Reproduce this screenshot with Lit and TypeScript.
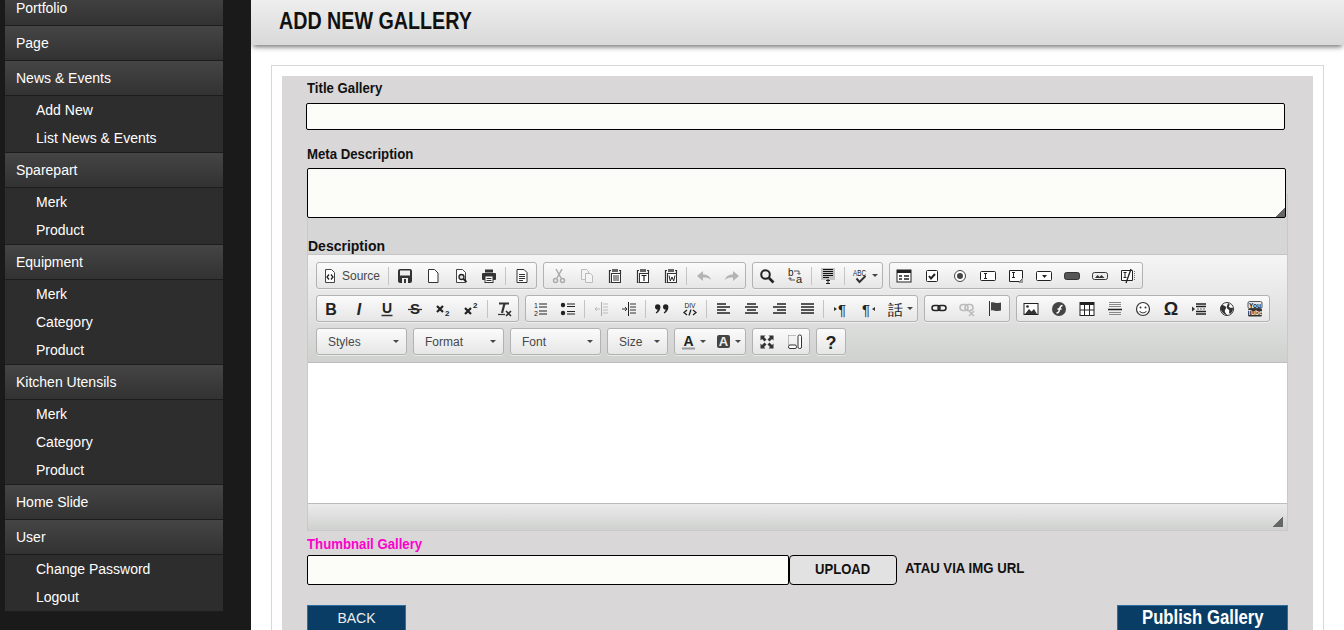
import { LitElement, html, css, svg } from 'lit';
import { customElement } from 'lit/decorators.js';

// sidebar data: header rows with their sub links
const MENU: { name: string; subs: string[] }[] = [
  { name: 'Portfolio', subs: [] },
  { name: 'Page', subs: [] },
  { name: 'News & Events', subs: ['Add New', 'List News & Events'] },
  { name: 'Sparepart', subs: ['Merk', 'Product'] },
  { name: 'Equipment', subs: ['Merk', 'Category', 'Product'] },
  { name: 'Kitchen Utensils', subs: ['Merk', 'Category', 'Product'] },
  { name: 'Home Slide', subs: [] },
  { name: 'User', subs: ['Change Password', 'Logout'] },
];

const PAGE = 'M3.5 1.5h6l3 3v10h-9z';

// 16x16 toolbar icons
const ICONS: Record<string, unknown> = {
  source: svg`<path d=${PAGE} fill="#fff" stroke="#444"/><path d="M7 6.5 5 9l2 2.500M9 6.500 11 9l-2 2.500" fill="none" stroke="#222" stroke-width="1.300"/>`,
  save: svg`<rect x="1" y="1" width="14" height="14" rx="2" fill="#333"/><rect x="3" y="2.500" width="10" height="5" fill="#eee"/><rect x="5" y="10" width="6" height="5" fill="#eee"/><rect x="7" y="11" width="2" height="4" fill="#333"/>`,
  newpage: svg`<path d="M3.500 1.500h6l3.500 3.500v9.500H3.500z" fill="#fff" stroke="#333"/>`,
  preview: svg`<path d=${PAGE} fill="#fff" stroke="#444"/><circle cx="8.500" cy="9" r="2.500" fill="#ddd" stroke="#222" stroke-width="1.300"/><path d="m10.500 11 3 3" stroke="#222" stroke-width="1.800"/>`,
  print: svg`<rect x="4" y="1.500" width="8" height="3" fill="#333"/><rect x="1" y="5" width="14" height="7" rx="1" fill="#333"/><rect x="4" y="8" width="8" height="6.500" fill="#fff" stroke="#333"/><path d="M5.500 10.500h5M5.500 12.500h5" stroke="#333"/>`,
  templates: svg`<path d="M3 1.500h7l3 3v10H3z" fill="#fff" stroke="#333"/><path d="M5 6.500h6M5 8.500h6M5 10.500h6M5 12.500h4" stroke="#333"/>`,
  cut: svg`<path d="m5 1 5 9M11 1 6 10" stroke="#aaa" stroke-width="1.500"/><circle cx="4.500" cy="12.500" r="2" fill="none" stroke="#aaa" stroke-width="1.500"/><circle cx="11.500" cy="12.500" r="2" fill="none" stroke="#aaa" stroke-width="1.500"/>`,
  copy: svg`<path d="M2.500 1.500h5l2 2v8h-7z" fill="#f4f4f4" stroke="#bbb"/><path d="M6.500 5.500h5l2 2v7h-7z" fill="#f4f4f4" stroke="#bbb"/>`,
  paste: svg`<path d="M4 2.500H2.500v12h1M12 2.500h1.500v3" fill="none" stroke="#333" stroke-width="1.200"/><rect x="5" y="1" width="6" height="3" fill="#666"/><rect x="4.500" y="5.500" width="9" height="9" fill="#fff" stroke="#333"/><path d="M6 8h6M6 10h6M6 12h6" stroke="#333"/>`,
  pastetext: svg`<path d="M4 2.500H2.500v12h1M12 2.500h1.500v3" fill="none" stroke="#333" stroke-width="1.200"/><rect x="5" y="1" width="6" height="3" fill="#666"/><rect x="4.500" y="5.500" width="9" height="9" fill="#fff" stroke="#333"/><path d="M6.500 7.500h5M9 7.500v5.500" stroke="#222" stroke-width="1.200"/>`,
  pasteword: svg`<path d="M4 2.500H2.500v12h1M12 2.500h1.500v3" fill="none" stroke="#333" stroke-width="1.200"/><rect x="5" y="1" width="6" height="3" fill="#666"/><rect x="4.500" y="5.500" width="9" height="9" fill="#fff" stroke="#333"/><path d="m6 7.500 1.300 5.500L9 9l1.700 4L12 7.500" fill="none" stroke="#222"/>`,
  undo: svg`<path d="M1 8 7 3v3.500c4 0 7 1.500 8 5.500-2-2-4-2.500-8-2.500V13z" fill="#b4b4b4"/>`,
  redo: svg`<path d="M15 8 9 3v3.500c-4 0-7 1.500-8 5.500 2-2 4-2.500 8-2.500V13z" fill="#b4b4b4"/>`,
  find: svg`<circle cx="6.500" cy="6.500" r="4.300" fill="#eee" stroke="#222" stroke-width="2"/><path d="m10 10 4.500 4.500" stroke="#222" stroke-width="2.600"/>`,
  replace: svg`<text x="1" y="8" class="ico-t" font-size="10">b</text><text x="9" y="15" class="ico-t" font-size="11">a</text><path d="M7 3h5v3M10.500 5l1.500 1.500L13.500 5M8 12H3V10M1.500 11 3 9.500 4.500 11" fill="none" stroke="#555"/>`,
  selectall: svg`<rect x="1" y="0" width="14" height="12" fill="#c2c2c2"/><path d="M3 1.500h10M3 3.500h10M3 5.500h10M3 7.500h10M3 9.500h6" stroke="#111"/><path d="M6 12.500h4M8 11v4M6 15.500h4" stroke="#222"/>`,
  spell: svg`<text x="0" y="7.500" class="ico-t" font-size="9" textLength="13" lengthAdjust="spacingAndGlyphs">ABC</text><path d="m3.500 10.500 3 3.500 6-6" fill="none" stroke="#333" stroke-width="2"/>`,
  form: svg`<rect x="1" y="2" width="14" height="12" fill="#fff" stroke="#222"/><rect x="1" y="2" width="14" height="3" fill="#222"/><path d="M3 8h3M3 11h3M8 8h5M8 11h5" stroke="#222" stroke-width="1.500"/>`,
  checkbox: svg`<rect x="2.500" y="2.500" width="11" height="11" rx="1" fill="#fff" stroke="#222"/><path d="m5 8 2 2.500L11 6" fill="none" stroke="#222" stroke-width="2"/>`,
  radio: svg`<circle cx="8" cy="8" r="5.500" fill="#fff" stroke="#444"/><circle cx="8" cy="8" r="3" fill="#444"/>`,
  textfield: svg`<rect x="0.500" y="3.500" width="15" height="9" rx="1" fill="#fff" stroke="#222"/><path d="M4 5.500h3M5.500 5.500v5M4 10.500h3" stroke="#222"/>`,
  textarea: svg`<path d="M1.500 2.500h13v8l-3 3h-10z" fill="#fff" stroke="#222"/><path d="M4 4.500h3M5.500 4.500v5M4 9.500h3" stroke="#222"/><path d="M15 10v5h-5z" fill="#999"/>`,
  select: svg`<rect x="0.500" y="3.500" width="15" height="9" rx="1" fill="#fff" stroke="#222"/><path d="M6 7h5L8.500 10z" fill="#222"/>`,
  button: svg`<rect x="0.500" y="4.500" width="15" height="7" rx="2" fill="#555" stroke="#333"/>`,
  imagebutton: svg`<rect x="0.500" y="4.500" width="15" height="7" rx="2" fill="#eee" stroke="#333"/><path d="m3 10 2.500-3 2 2 2-2 3 3z" fill="#333"/>`,
  hidden: svg`<path d="M1.500 2.500h11v10h-11z" fill="#fff" stroke="#222"/><path d="M3.500 4.500h3M5 4.500v5M3.500 9.500h3" stroke="#222"/><path d="M11 1 6 15" stroke="#222" stroke-width="1.300"/><path d="M14.500 3v10" stroke="#777" stroke-dasharray="1 1"/>`,
  bold: svg`<text x="8" y="13.500" text-anchor="middle" class="ico-t" font-size="16" font-weight="700">B</text>`,
  italic: svg`<text x="8" y="13.500" text-anchor="middle" class="ico-t" font-size="16" font-weight="700" font-style="italic">I</text>`,
  underline: svg`<text x="8" y="11.500" text-anchor="middle" class="ico-t" font-size="14" font-weight="700">U</text><path d="M2.500 14.500h11" stroke="#333" stroke-width="1.500"/>`,
  strike: svg`<text x="8" y="13" text-anchor="middle" class="ico-t" font-size="15" font-weight="700">S</text><path d="M1 8.500h14" stroke="#333" stroke-width="1.300"/>`,
  sub: svg`<path d="m2 5 6 6M8 5l-6 6" stroke="#222" stroke-width="2.200"/><text x="10" y="15" class="ico-t" font-size="8" font-weight="700">2</text>`,
  sup: svg`<path d="m2 7 6 6M8 7l-6 6" stroke="#222" stroke-width="2.200"/><text x="10" y="7" class="ico-t" font-size="8" font-weight="700">2</text>`,
  removeformat: svg`<path d="M3 2.500h10" stroke="#333" stroke-width="2"/><path d="M8.500 2.500 6 12" stroke="#333" stroke-width="2.200"/><path d="M2 13.500h7" stroke="#333" stroke-width="1.200"/><path d="m10 10 5 5M15 10l-5 5" stroke="#333" stroke-width="1.600"/>`,
  numbered: svg`<text x="2" y="7" class="ico-t" font-size="7">1</text><text x="2" y="14.500" class="ico-t" font-size="7">2</text><path d="M7 3h8M7 6h8M7 10h8M7 13h8" stroke="#222" stroke-width="1.200"/>`,
  bullet: svg`<circle cx="3" cy="4" r="2.200" fill="#222"/><circle cx="3" cy="12" r="2.200" fill="#222"/><path d="M7 3h8M7 5.500h8M7 10.500h8M7 13h8" stroke="#222" stroke-width="1.200"/>`,
  outdent: svg`<path d="M8.500 1v14" stroke="#aaa"/><path d="M10 3h5M10 6h5M10 9h5M10 12h5" stroke="#bbb"/><path d="M7 8H2M4 6 2 8l2 2" fill="none" stroke="#bbb"/>`,
  indent: svg`<path d="M7.500 1v14" stroke="#222"/><path d="M9 3h6M9 6h6M9 9h6M9 12h6" stroke="#333"/><path d="M1 8h5M4 6l2 2-2 2" fill="none" stroke="#333"/>`,
  quote: svg`<path d="M1 6a2.700 2.700 0 1 1 5.400 0c0 3-1.500 5-4 6.500l-.7-.9C3 10.500 3.500 9.500 3.600 8.600 2 8.700 1 7.500 1 6zM9 6a2.700 2.700 0 1 1 5.400 0c0 3-1.500 5-4 6.500l-.7-.9c1.300-1.100 1.800-2.100 1.900-3C10 8.700 9 7.500 9 6z" fill="#222"/>`,
  div: svg`<text x="8" y="7" text-anchor="middle" class="ico-t" font-size="8" textLength="11" lengthAdjust="spacingAndGlyphs">DIV</text><path d="M5 9 2 11.500 5 14M11 9l3 2.500-3 2.500M9 8.500l-2 6" fill="none" stroke="#222" stroke-width="1.300"/>`,
  left: svg`<path d="M2 3h9M2 6h13M2 9h9M2 12h13" stroke="#222" stroke-width="1.600"/>`,
  center: svg`<path d="M4 3h9M2 6h13M4 9h9M2 12h13" stroke="#222" stroke-width="1.600"/>`,
  right: svg`<path d="M6 3h9M2 6h13M6 9h9M2 12h13" stroke="#222" stroke-width="1.600"/>`,
  justify: svg`<path d="M2 3h13M2 6h13M2 9h13M2 12h13" stroke="#222" stroke-width="1.600"/>`,
  ltr: svg`<path d="M2 6v4l3-2z" fill="#333"/><text x="6" y="13.500" class="ico-t" font-size="15">¶</text>`,
  rtl: svg`<path d="M15 6v4l-3-2z" fill="#333"/><text x="2" y="13.500" class="ico-t" font-size="15">¶</text>`,
  language: svg`<text x="0" y="13.500" class="ico-t" font-family="Noto Sans CJK TC" font-size="15">話</text>`,
  link: svg`<rect x="1" y="4.500" width="8" height="5" rx="2.500" fill="none" stroke="#222" stroke-width="1.500"/><rect x="7" y="4.500" width="8" height="5" rx="2.500" fill="none" stroke="#222" stroke-width="1.500"/>`,
  unlink: svg`<rect x="1" y="3.500" width="8" height="6" rx="3" fill="none" stroke="#bbb" stroke-width="1.600"/><rect x="6" y="3.500" width="8" height="6" rx="3" fill="none" stroke="#bbb" stroke-width="1.600"/><path d="m10 10 5 5M15 10l-5 5" stroke="#bbb" stroke-width="1.500"/>`,
  anchor: svg`<path d="M2.500 0v15" stroke="#333"/><path d="M4 1.500c3-1 5 1 7.500.5l2.500-.5v8l-3 .5C8 10.500 7 8.500 4 9.500z" fill="#444"/>`,
  image: svg`<rect x="1" y="2.500" width="14" height="11" fill="#fff" stroke="#222"/><circle cx="4.500" cy="5.500" r="1.300" fill="#222"/><path d="m2 13 4-5 2.500 2.500L11 8l3 5z" fill="#333"/>`,
  flash: svg`<circle cx="8" cy="8" r="7" fill="#444"/><path d="M5.500 12c3 0 2.500-2 3-4s1-3.500 3-3.500M6.500 8h4" fill="none" stroke="#fff" stroke-width="1.500"/>`,
  table: svg`<rect x="1" y="1.500" width="14" height="13" fill="#fff" stroke="#222"/><rect x="1" y="1" width="14" height="3" fill="#222"/><path d="M1 9h14M5.500 4v10M10.500 4v10" stroke="#222"/>`,
  hr: svg`<path d="M2 1.500h12M2 3.500h12M2 5.500h12M2 11.500h12M2 13.500h12" stroke="#888"/><path d="M1 8.500h14" stroke="#222" stroke-width="1.500"/>`,
  smiley: svg`<circle cx="8" cy="8" r="6.500" fill="#fff" stroke="#333" stroke-width="1.200"/><circle cx="5.500" cy="6.500" r="1" fill="#333"/><circle cx="10.500" cy="6.500" r="1" fill="#333"/><path d="M4.500 10c1.500 2.500 5.500 2.500 7 0" fill="none" stroke="#333"/>`,
  omega: svg`<text x="8" y="14" text-anchor="middle" class="ico-t" font-family="Liberation Serif" font-size="18" font-weight="700">Ω</text>`,
  pagebreak: svg`<path d="M1 5.500v5L4 8z" fill="#333"/><path d="M5 3h10M5 5.500h10M5 10.500h10M5 13h10" stroke="#222" stroke-width="1.500"/><path d="M6 8h9" stroke="#666" stroke-dasharray="2 1"/>`,
  iframe: svg`<circle cx="8" cy="8" r="6.500" fill="#fff" stroke="#333"/><path d="M3 4c2 0 3 1 4 2S5 9 6 11s2 2 2 3.500C7 14 3 12 2 9s0-4 1-5zM9 2c2 1 2 2 1 3s2 2 4 2c0 3-1 4-3 6-2-2 0-3-1-4S7 7 8 5z" fill="#333"/>`,
  youtube: svg`<rect x="1" y="0.500" width="14" height="7" rx="1.500" fill="#e8e8e8" stroke="#555"/><rect x="1" y="7.500" width="14" height="8" rx="1.500" fill="#333"/><text x="8" y="6.500" text-anchor="middle" class="ico-t" font-size="6.500" font-weight="700">You</text><text x="8" y="14" text-anchor="middle" font-family="Liberation Sans" fill="#eee" font-size="6.500" font-weight="700">Tube</text>`,
  maximize: svg`<path d="M1.500 1.500h5l-1.500 1.500 2.500 2.500-2 2L3 5 1.500 6.500zM14.500 1.500v5L13 5l-2.500 2.500-2-2L11 3 9.500 1.500zM1.500 14.500v-5L3 11l2.500-2.500 2 2L5 13l1.500 1.500zM14.500 14.500h-5L11 13l-2.500-2.500 2-2L13 11l1.500-1.500z" fill="#333"/>`,
  blocks: svg`<path d="M1.500 1.500h8M1.500 1.500v9" stroke="#888" stroke-dasharray="1 1"/><rect x="1.500" y="11" width="8" height="3.500" rx="1.500" fill="#fff" stroke="#333"/><rect x="11" y="1" width="3.500" height="13.500" rx="1.500" fill="#fff" stroke="#333"/>`,
};

type Btn = { i: string; arrow?: boolean };
type Item = Btn | 'sep';
const b = (...names: string[]): Item[] => names.map((n) => (n === '|' ? 'sep' : { i: n }));

const ROW1: Item[][] = [
  b('|', 'save', 'newpage', 'preview', 'print', '|', 'templates'),
  b('cut', 'copy', 'paste', 'pastetext', 'pasteword', '|', 'undo', 'redo'),
  [...b('find', 'replace', '|', 'selectall', '|'), { i: 'spell', arrow: true }],
  b('form', 'checkbox', 'radio', 'textfield', 'textarea', 'select', 'button', 'imagebutton', 'hidden'),
];
const ROW2: Item[][] = [
  b('bold', 'italic', 'underline', 'strike', 'sub', 'sup', '|', 'removeformat'),
  [...b('numbered', 'bullet', '|', 'outdent', 'indent', '|', 'quote', 'div', '|', 'left', 'center', 'right', 'justify', '|', 'ltr', 'rtl'), { i: 'language', arrow: true }],
  b('link', 'unlink', 'anchor'),
  b('image', 'flash', 'table', 'hr', 'smiley', 'omega', 'pagebreak', 'iframe', 'youtube'),
];
const COMBOS: [string, number][] = [['Styles', 91], ['Format', 91], ['Font', 91], ['Size', 61]];

@customElement('app-root')
export class AppRoot extends LitElement {
  static styles = css`
    :host {
      display: grid;
      grid-template-columns: 251px 1fr;
      width: 1344px;
      height: 630px;
      overflow: hidden;
      font-family: 'Liberation Sans', Arial, sans-serif;
      background: #fff;
    }
    .side {
      background: #1a1a1a;
      padding: 0 28px 0 5px;
      overflow: hidden;
      height: 630px;
    }
    .menu {
      margin-top: -9px;
      background: #2d2d2d;
    }
    .head {
      height: 34px;
      line-height: 34px;
      padding-left: 11px;
      border-bottom: 1px solid #1c1c1c;
      background: linear-gradient(#454545, #323232);
      color: #fff;
      font-size: 14px;
    }
    .subs {
      border-bottom: 1px solid #1c1c1c;
    }
    .sub {
      height: 28px;
      line-height: 28px;
      padding-left: 31px;
      color: #fff;
      font-size: 14px;
    }
    .main {
      height: 630px;
      overflow: hidden;
    }
    .top {
      height: 45px;
      background: linear-gradient(#eeeeee, #d9d9d9);
      box-shadow: 0 4px 5px -2px rgba(0, 0, 0, 0.55);
      padding-left: 28px;
      line-height: 42px;
    }
    .top h1 {
      margin: 0;
      display: inline-block;
      font-size: 24px;
      font-weight: 700;
      color: #111;
      transform: scaleX(0.82);
      transform-origin: left;
      white-space: nowrap;
    }
    .panel {
      margin: 20px 20px 0;
      border: 1px solid #d8d8d8;
      padding: 10px 10px 0;
      height: 600px;
      box-sizing: border-box;
    }
    .form {
      background: #d9d7d8;
      height: 600px;
      padding-left: 25px;
    }
    .lbl {
      display: block;
      font-size: 15px;
      font-weight: 700;
      color: #111;
      line-height: 24px;
      transform: scaleX(0.88);
      transform-origin: left;
      white-space: nowrap;
    }
    .field {
      display: block;
      box-sizing: border-box;
      background: #fcfdf8;
      border: 1px solid #000;
      border-radius: 2px;
      padding: 0;
      margin: 0;
      outline: none;
    }
    .title {
      width: 979px;
      height: 27px;
      margin: 3px 0 12px -1px;
    }
    .meta {
      position: relative;
      z-index: 1;
      width: 979px;
      height: 50px;
      margin-top: 2px;
      resize: none;
      background-image: linear-gradient(135deg, transparent 50%, #666 50%);
      background-size: 9px 9px;
      background-position: right bottom;
      background-repeat: no-repeat;
    }
    .editor {
      width: 981px;
      box-sizing: border-box;
      height: 337px;
      margin-top: -24px;
      border: 1px solid #c9c9c9;
      display: flex;
      flex-direction: column;
      background: #d6d6d6;
    }
    .desc {
      height: 59px;
      box-sizing: border-box;
      padding-top: 43px;
      font-size: 14px;
      line-height: 16px;
      font-weight: 700;
      color: #111;
    }
    .tools {
      height: 109px;
      box-sizing: border-box;
      padding: 7px 8px 0;
      background: linear-gradient(#f5f5f5, #cfd1cf);
      border-top: 1px solid #c4c4c4;
      border-bottom: 1px solid #bcbcbc;
      display: flex;
      flex-direction: column;
      gap: 6px;
    }
    .row {
      display: flex;
      gap: 6px;
      height: 27px;
    }
    .grp {
      display: flex;
      align-items: center;
      box-sizing: border-box;
      height: 27px;
      border: 1px solid #b2b2b2;
      border-radius: 3px;
      background: linear-gradient(#fbfbfb, #e6e6e6);
      box-shadow: 0 1px 0 rgba(255, 255, 255, 0.5);
    }
    .btn {
      width: 28px;
      height: 25px;
      box-sizing: border-box;
      display: flex;
      align-items: center;
      justify-content: center;
      flex: none;
    }
    /* the cut/copy group sits a pixel further right in the reference */
    .grp.nudge .btn {
      padding-left: 2px;
    }
    .btn svg, .src svg {
      width: 16px;
      height: 16px;
      flex: none;
      overflow: visible;
    }
    .ico-t {
      font-family: 'Liberation Sans', sans-serif;
      fill: #222;
    }
    .btn.arr {
      width: 35px;
      justify-content: flex-start;
      padding-left: 6px;
      gap: 3px;
    }
    .tri {
      width: 0;
      height: 0;
      border: 3px solid transparent;
      border-top-color: #474747;
      border-bottom: 0;
      flex: none;
    }
    .src {
      display: flex;
      align-items: center;
      width: 69px;
      box-sizing: border-box;
      padding-left: 5px;
      gap: 4px;
      font-size: 12px;
      color: #474747;
    }
    .sep {
      width: 1px;
      height: 18px;
      margin: 0 2px;
      background: #c4c4c4;
      flex: none;
    }
    .combo {
      display: flex;
      align-items: center;
      justify-content: space-between;
      padding: 0 7px 0 11px;
      font-size: 12px;
      color: #474747;
    }
    .body {
      height: 140px;
      flex: none;
      background: #fff;
    }
    .foot {
      flex: 1;
      border-top: 1px solid #bcbcbc;
      background: linear-gradient(#ebebeb, #cfd1cf);
      display: flex;
      justify-content: flex-end;
      align-items: flex-end;
      padding: 0 4px 3px 0;
    }
    .grip {
      width: 10px;
      height: 10px;
      background: linear-gradient(135deg, transparent 50%, #666 50%);
    }
    .thumb {
      color: #f0c;
      line-height: 22px;
      margin-top: 2px;
    }
    .upl {
      display: flex;
      align-items: center;
      height: 30px;
    }
    .upl .field {
      width: 482px;
      height: 30px;
    }
    .upload {
      width: 108px;
      height: 30px;
      box-sizing: border-box;
      border: 1px solid #000;
      border-radius: 4px;
      background: #e2e2e2;
      font-size: 15px;
      font-weight: 700;
      color: #111;
      text-align: center;
      line-height: 25px;
    }
    .upload span {
      display: inline-block;
      transform: scaleX(0.87);
    }
    .via {
      margin: 0 0 5px 8px;
      font-size: 15px;
      font-weight: 700;
      color: #111;
      transform: scaleX(0.88);
      transform-origin: left;
      white-space: nowrap;
    }
    .acts {
      width: 981px;
      display: flex;
      justify-content: space-between;
      margin-top: 20px;
    }
    .back, .pub {
      height: 32px;
      box-sizing: border-box;
      background: #0a3d66;
      border: 1px solid #2d6ea3;
      border-bottom: 0;
      color: #eee;
      text-align: center;
    }
    .back {
      width: 99px;
      font-size: 14px;
      line-height: 24px;
    }
    .pub {
      width: 171px;
      font-size: 20px;
      font-weight: 700;
      line-height: 23px;
      color: #fff;
    }
    .pub span {
      display: inline-block;
      transform: scaleX(0.835);
      white-space: nowrap;
    }
  `;

  private renderItem(it: Item) {
    if (it === 'sep') return html`<span class="sep"></span>`;
    const icon = html`<svg viewBox="0 0 16 16">${ICONS[it.i]}</svg>`;
    return it.arrow
      ? html`<span class="btn arr">${icon}<i class="tri"></i></span>`
      : html`<span class="btn">${icon}</span>`;
  }

  private renderGroups(groups: Item[][], source = false) {
    return groups.map(
      (g, n) => html`<div class="grp ${source && n === 1 ? 'nudge' : ''}">
        ${source && n === 0
          ? html`<span class="src"><svg viewBox="0 0 16 16">${ICONS.source}</svg>Source</span>`
          : ''}
        ${g.map((it) => this.renderItem(it))}
      </div>`
    );
  }

  render() {
    return html`
      <nav class="side">
        <div class="menu">
          ${MENU.map(
            (m) => html`
              <div class="head">${m.name}</div>
              ${m.subs.length
                ? html`<div class="subs">${m.subs.map((s) => html`<div class="sub">${s}</div>`)}</div>`
                : ''}
            `
          )}
        </div>
      </nav>
      <main class="main">
        <div class="top"><h1>ADD NEW GALLERY</h1></div>
        <div class="panel">
          <div class="form">
            <label class="lbl">Title Gallery</label>
            <input class="field title" type="text" />
            <label class="lbl">Meta Description</label>
            <textarea class="field meta"></textarea>
            <div class="editor">
              <div class="desc">Description</div>
              <div class="tools">
                <div class="row">${this.renderGroups(ROW1, true)}</div>
                <div class="row">${this.renderGroups(ROW2)}</div>
                <div class="row">
                  ${COMBOS.map(
                    ([name, w]) => html`<div class="grp combo" style="width:${w}px">${name}<i class="tri"></i></div>`
                  )}
                  <div class="grp">
                    <span class="btn arr"><svg viewBox="0 0 16 16"><text x="7.500" y="12" text-anchor="middle" class="ico-t" font-size="14" font-weight="700">A</text><path d="M1 14.500h13" stroke="#999" stroke-width="2"/></svg><i class="tri"></i></span>
                    <span class="btn arr"><svg viewBox="0 0 16 16"><rect x="1" y="1" width="13" height="13" rx="2" fill="#444"/><text x="7.500" y="12" text-anchor="middle" fill="#eee" font-family="Liberation Sans" font-size="13" font-weight="700">A</text></svg><i class="tri"></i></span>
                  </div>
                  <div class="grp">
                    <span class="btn"><svg viewBox="0 0 16 16">${ICONS.maximize}</svg></span>
                    <span class="btn"><svg viewBox="0 0 16 16">${ICONS.blocks}</svg></span>
                  </div>
                  <div class="grp">
                    <span class="btn"><svg viewBox="0 0 16 16"><text x="8" y="14.500" text-anchor="middle" class="ico-t" font-size="18" font-weight="700">?</text></svg></span>
                  </div>
                </div>
              </div>
              <div class="body"></div>
              <div class="foot"><i class="grip"></i></div>
            </div>
            <label class="lbl thumb">Thumbnail Gallery</label>
            <div class="upl">
              <input class="field" type="text" />
              <div class="upload"><span>UPLOAD</span></div>
              <span class="via">ATAU VIA IMG URL</span>
            </div>
            <div class="acts">
              <div class="back">BACK</div>
              <div class="pub"><span>Publish Gallery</span></div>
            </div>
          </div>
        </div>
      </main>
    `;
  }
}
